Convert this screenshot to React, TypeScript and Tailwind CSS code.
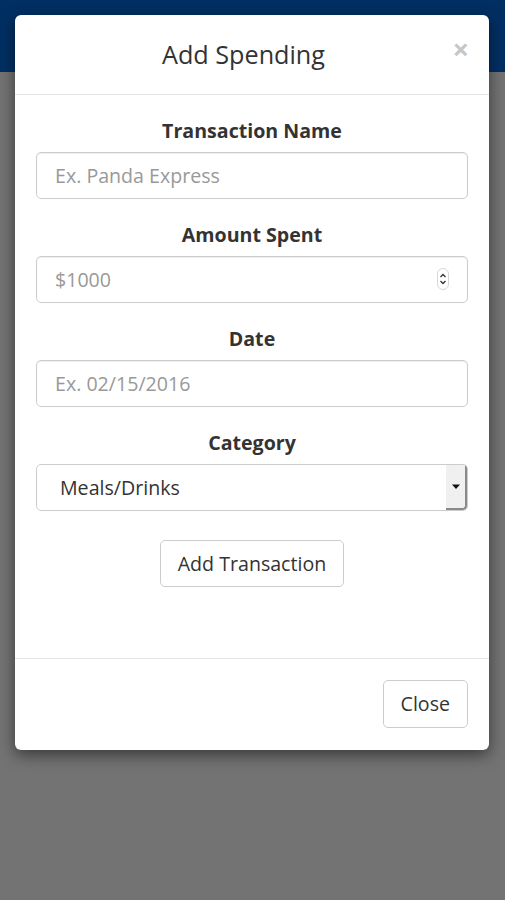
import React from 'react';

const font = { fontFamily: '"Open Sans", "Liberation Sans", sans-serif' };

const Field: React.FC<{ label: string; children: React.ReactNode }> = ({ label, children }) => (
    <div className="mb-[22px]">
        <label className="block text-center text-[19.6px] leading-[28px] font-bold text-[#333] mb-[7px]">{label}</label>
        {children}
    </div>
);

const inputCls =
    'w-full h-[47px] rounded-[5px] border border-[#ccc] bg-white px-[18px] text-[19.6px] text-[#555] placeholder:text-[#999] outline-none shadow-[inset_0_1px_1px_rgba(0,0,0,0.075)]';

export default function App() {
    return (
        <div className="relative w-[505px] h-[900px] overflow-hidden bg-[#737373]" style={font}>
            <div className="h-[72px] bg-[#022f63]" />

            {/* modal */}
            <div className="absolute inset-0 pl-[15px] pr-[16px] pt-[15px]">
                <div className="bg-white rounded-[6px] shadow-[0_5px_15px_rgba(0,0,0,0.5)]">
                    <div className="relative border-b border-[#e5e5e5] pt-[21px] pb-[22px] px-[21px]">
                        <h4 className="text-center text-[25.2px] leading-[36px] text-[#333] pr-[17px]">Add Spending</h4>
                        <button className="absolute right-[20px] top-[19px] text-[29px] leading-none font-bold text-[#c6c6c6]">×</button>
                    </div>

                    <div className="px-[21px] pt-[22px] pb-[71px]">
                        <Field label="Transaction Name">
                            <input className={inputCls} placeholder="Ex. Panda Express" />
                        </Field>
                        <Field label="Amount Spent">
                            <div className="relative">
                                <input className={inputCls} placeholder="$1000" />
                                <svg className="absolute right-[19px] top-[12px]" width="12" height="22" viewBox="0 0 12 22">
                                    <rect x="0.5" y="0.5" width="11" height="21" rx="5.5" fill="#fff" stroke="#d6d6d6" />
                                    <path d="M3.5 9 L6 6.5 L8.5 9" fill="none" stroke="#333" strokeWidth="1.3" />
                                    <path d="M3.5 13 L6 15.5 L8.5 13" fill="none" stroke="#333" strokeWidth="1.3" />
                                </svg>
                            </div>
                        </Field>
                        <Field label="Date">
                            <input className={inputCls} placeholder="Ex. 02/15/2016" />
                        </Field>
                        <Field label="Category">
                            <div className="flex h-[47px] rounded-[5px] border border-[#ccc] bg-white overflow-hidden">
                                <div className="flex-1 flex items-center pl-[23px] text-[19.6px] text-[#333]">Meals/Drinks</div>
                                <div className="w-[21px] flex items-center justify-center bg-[#f0f0f0] border-r-[2px] border-b-[2px] border-[#8a8a8a] rounded-br-[4px]">
                                    <svg width="10" height="6" viewBox="0 0 10 6">
                                        <path d="M1 0.5 L9 0.5 L5 5 Z" fill="#111" />
                                    </svg>
                                </div>
                            </div>
                        </Field>
                        <div className="flex justify-center pt-[7px]">
                            <button className="h-[47px] px-[17px] rounded-[5px] border border-[#ccc] bg-white text-[19.6px] text-[#333]">
                                Add Transaction
                            </button>
                        </div>
                    </div>

                    <div className="border-t border-[#e5e5e5] pt-[21px] pb-[22px] px-[21px] flex justify-end">
                        <button className="h-[48px] px-[17px] rounded-[5px] border border-[#ccc] bg-white text-[19.6px] text-[#333]">
                            Close
                        </button>
                    </div>
                </div>
            </div>
        </div>
    );
}
